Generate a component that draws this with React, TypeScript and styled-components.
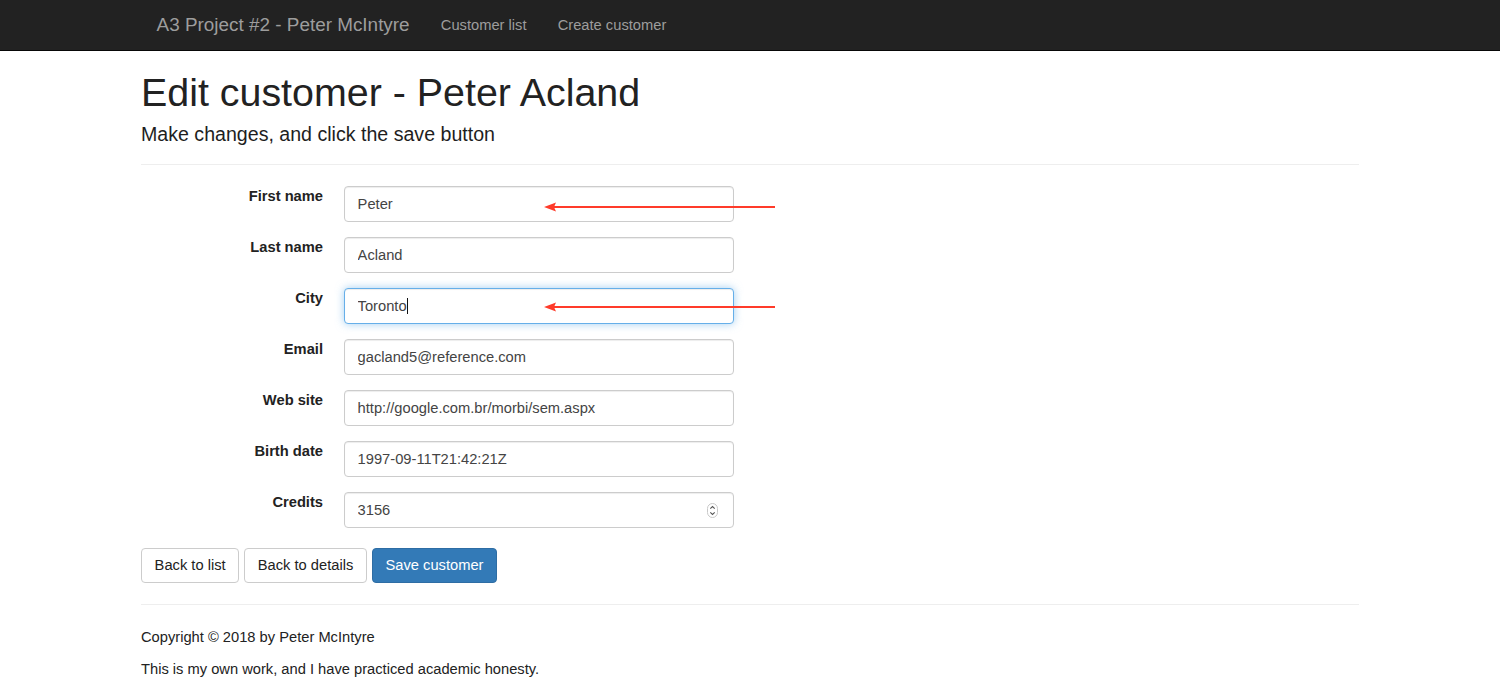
import React from "react";
import styled, { createGlobalStyle } from "styled-components";

const GlobalStyle = createGlobalStyle`
  html, body { margin: 0; padding: 0; background: #fff; }
  body {
    font-family: "Liberation Sans", Arial, Helvetica, sans-serif;
    font-size: 14.7px;
    line-height: 21px;
    color: #333;
  }
  * { box-sizing: border-box; }
`;

const Navbar = styled.nav`
  background: #222;
  border-bottom: 1px solid #080808;
  height: 51px;
`;

const Container = styled.div`
  width: 1250px;
  margin: 0 auto;
  padding: 0 16px;
`;

const NavInner = styled(Container)`
  display: flex;
  align-items: center;
  height: 50px;
`;

const Brand = styled.a`
  font-size: 18.9px;
  line-height: 20px;
  padding: 15px 15.6px;
  color: #9d9d9d;
  text-decoration: none;
`;

const NavLink = styled.a`
  font-size: 14.7px;
  line-height: 20px;
  padding: 15px 15.6px;
  color: #9d9d9d;
  text-decoration: none;
`;

const Title = styled.h1`
  font-size: 39.4px;
  line-height: 1.1;
  font-weight: 400;
  margin: 20px 0 10px;
  color: #222;
`;

const Subtitle = styled.h4`
  font-size: 19.6px;
  line-height: 1.1;
  font-weight: 400;
  margin: 0;
  color: #1e1e1e;
`;

const Rule = styled.hr<{ $top: number; $bottom: number }>`
  border: 0;
  border-top: 1px solid #eee;
  margin: ${(p) => p.$top}px 0 ${(p) => p.$bottom}px;
`;

const FormGrid = styled.form`
  display: grid;
  grid-template-columns: 182px 390px;
  column-gap: 21px;
  row-gap: 15px;
`;

const Label = styled.label`
  text-align: right;
  font-weight: 700;
  padding-top: 0;
  line-height: 21px;
  color: #222;
`;

const Field = styled.div`
  position: relative;
  height: 36px;
`;

const Input = styled.input<{ $focus?: boolean }>`
  display: block;
  width: 100%;
  height: 36px;
  padding: 0 12.6px;
  font-family: inherit;
  font-size: 14.7px;
  color: #444;
  background: #fff;
  border: 1px solid ${(p) => (p.$focus ? "#66afe9" : "#ccc")};
  border-radius: 4px;
  outline: none;
  box-shadow: inset 0 1px 1px rgba(0, 0, 0, 0.075)
    ${(p) => (p.$focus ? ", 0 0 8px rgba(102, 175, 233, 0.6)" : "")};
`;

const CaretLayer = styled.div`
  position: absolute;
  left: 13.6px;
  top: 0;
  height: 36px;
  display: flex;
  align-items: center;
  font-size: 14.7px;
  pointer-events: none;
`;

const Ghost = styled.span`
  visibility: hidden;
  white-space: pre;
`;

const Caret = styled.span`
  display: inline-block;
  width: 1px;
  height: 16px;
  background: #111;
`;

const Spinner = styled.svg`
  position: absolute;
  right: 16px;
  top: 11px;
`;

const Arrow = styled.svg<{ $top: number }>`
  position: absolute;
  left: 200px;
  top: ${(p) => p.$top}px;
  overflow: visible;
`;

const Actions = styled.div`
  display: flex;
  gap: 5px;
  margin-top: 20px;
`;

const Button = styled.button<{ $primary?: boolean }>`
  font-family: inherit;
  font-size: 14.7px;
  line-height: 21px;
  padding: 6px 12.6px;
  border-radius: 4px;
  border: 1px solid ${(p) => (p.$primary ? "#2e6da4" : "#ccc")};
  background: ${(p) => (p.$primary ? "#337ab7" : "#fff")};
  color: ${(p) => (p.$primary ? "#fff" : "#222")};
  cursor: pointer;
`;

const FooterText = styled.p`
  margin: 0 0 11px;
  line-height: 21px;
  color: #222;
`;

const ArrowShape: React.FC<{ top: number }> = ({ top }) => (
  <Arrow $top={top} width="232" height="10" viewBox="0 0 232 10">
    <line x1="9" y1="5" x2="231" y2="5" stroke="#ff3b2a" strokeWidth="2.2" />
    <polygon points="0,5 12,0.5 10,5 12,9.5" fill="#ff3b2a" />
  </Arrow>
);

type Row = { label: string; value: string; arrow?: number; focus?: boolean; number?: boolean };

const rows: Row[] = [
  { label: "First name", value: "Peter", arrow: 16 },
  { label: "Last name", value: "Acland" },
  { label: "City", value: "Toronto", arrow: 14, focus: true },
  { label: "Email", value: "gacland5@reference.com" },
  { label: "Web site", value: "http://google.com.br/morbi/sem.aspx" },
  { label: "Birth date", value: "1997-09-11T21:42:21Z" },
  { label: "Credits", value: "3156", number: true },
];

export default function App() {
  return (
    <>
      <GlobalStyle />
      <Navbar>
        <NavInner>
          <Brand href="#">A3 Project #2 - Peter McIntyre</Brand>
          <NavLink href="#">Customer list</NavLink>
          <NavLink href="#">Create customer</NavLink>
        </NavInner>
      </Navbar>
      <Container>
        <Title>Edit customer - Peter Acland</Title>
        <Subtitle>Make changes, and click the save button</Subtitle>
        <Rule $top={18} $bottom={21} />
        <FormGrid onSubmit={(e) => e.preventDefault()}>
          {rows.map((r) => (
            <React.Fragment key={r.label}>
              <Label>{r.label}</Label>
              <Field>
                <Input $focus={r.focus} defaultValue={r.value} readOnly />
                {r.focus && (
                  <CaretLayer>
                    <Ghost>{r.value}</Ghost>
                    <Caret />
                  </CaretLayer>
                )}
                {r.number && (
                  <Spinner width="11" height="15" viewBox="0 0 11 15">
                    <rect x="0.5" y="0.5" width="10" height="14" rx="5" fill="#fff" stroke="#c8c8c8" />
                    <path d="M3.3 5.6 L5.5 3.6 L7.7 5.6" fill="none" stroke="#555" strokeWidth="1.1" />
                    <path d="M3.3 9.4 L5.5 11.4 L7.7 9.4" fill="none" stroke="#555" strokeWidth="1.1" />
                  </Spinner>
                )}
                {r.arrow !== undefined && <ArrowShape top={r.arrow} />}
              </Field>
            </React.Fragment>
          ))}
        </FormGrid>
        <Actions>
          <Button type="button">Back to list</Button>
          <Button type="button">Back to details</Button>
          <Button type="button" $primary>
            Save customer
          </Button>
        </Actions>
        <Rule $top={21} $bottom={22} />
        <FooterText>Copyright © 2018 by Peter McIntyre</FooterText>
        <FooterText>This is my own work, and I have practiced academic honesty.</FooterText>
      </Container>
    </>
  );
}
